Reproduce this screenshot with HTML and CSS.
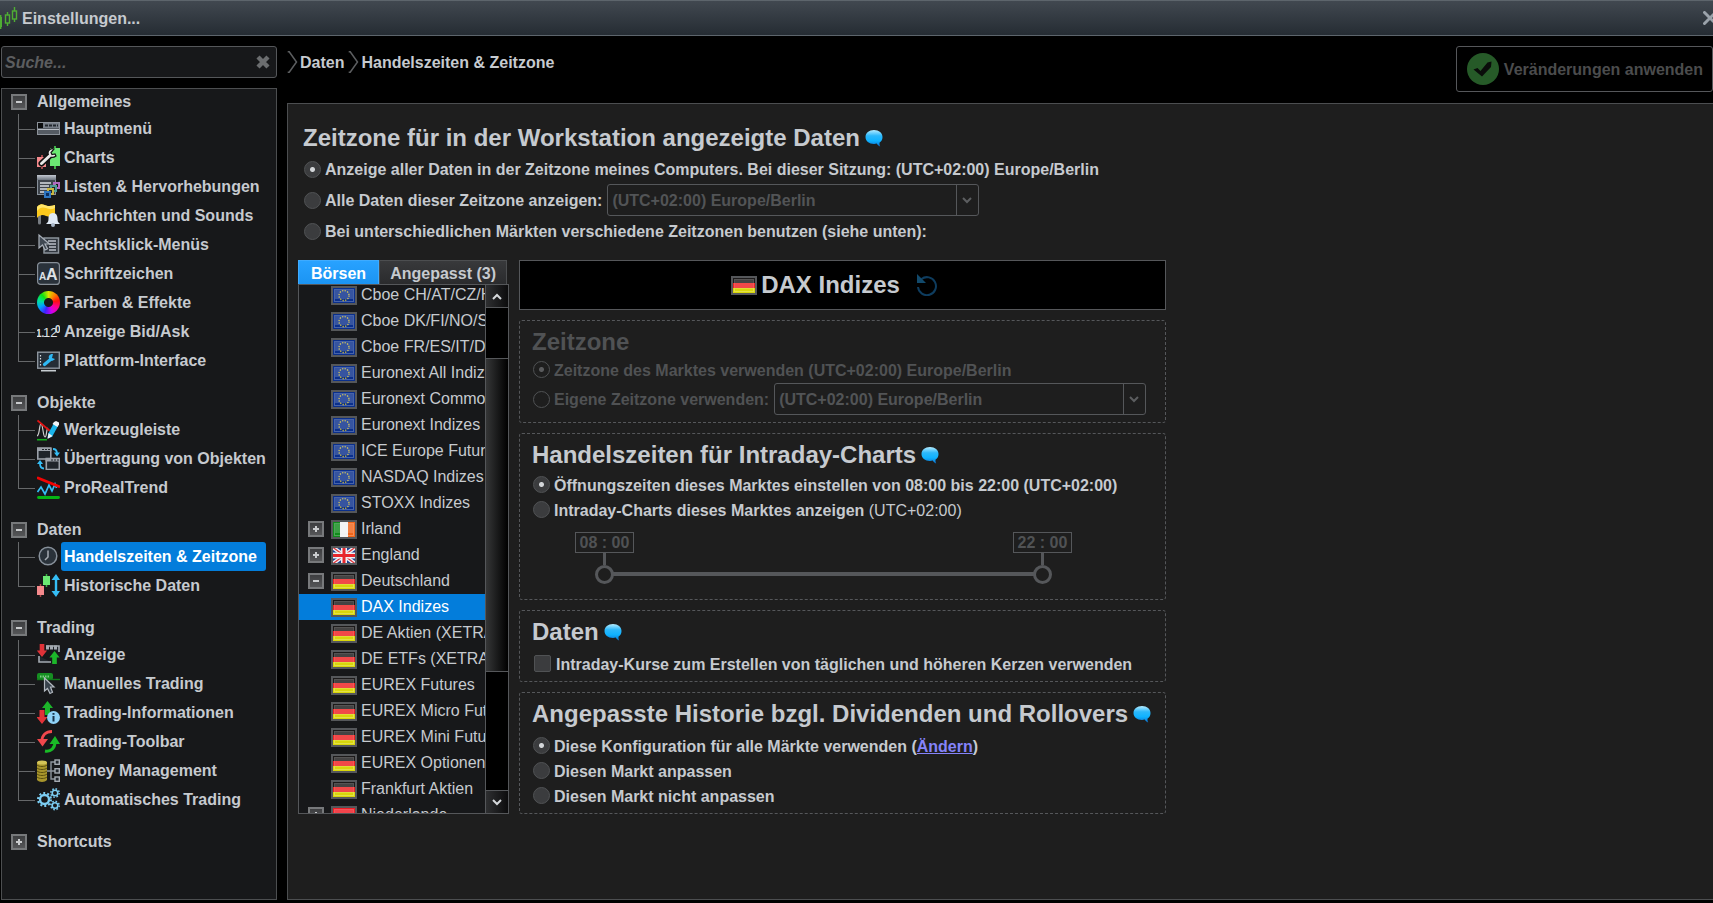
FILE: index.html
```html
<!DOCTYPE html>
<html lang="de">
<head>
  <meta charset="UTF-8" />
  <meta name="viewport" content="width=device-width, initial-scale=1" />
  <title>Einstellungen...</title>
  <link rel="stylesheet" href="styles.css">
</head>
<body>

  <!-- Shared symbols -->
  <svg class="sprite" aria-hidden="true">
    <defs>
      <linearGradient id="bubbleFill" x1="0" y1="0" x2="0" y2="1">
        <stop offset="0" stop-color="#b4ecff" />
        <stop offset="0.35" stop-color="#2cb8fb" />
        <stop offset="0.65" stop-color="#0fb2ff" />
        <stop offset="1" stop-color="#0a6fd0" />
      </linearGradient>
      <linearGradient id="steel" x1="0" y1="0" x2="0" y2="1">
        <stop offset="0" stop-color="#c3c9d2" />
        <stop offset="1" stop-color="#6d7580" />
      </linearGradient>
    </defs>
    <symbol id="bubble" viewBox="0 0 18 17">
      <path d="M9 0C4 0 .5 3 .5 7s3.500 7 8.500 7c1 0 2 0 2.800-.4.700 1.300 1.800 2.300 3.400 3-.7-1.200-.9-2.600-.6-4C16.600 11.300 17.500 9.300 17.500 7c0-4-3.500-7-8.500-7z" fill="url(#bubbleFill)" />
    </symbol>
    <symbol id="glare" viewBox="0 0 26 19">
      <path d="M4 4h18v9H4z" fill="#fff" opacity=".18" />
      <rect x="3.500" y="3.500" width="19" height="12" fill="none" stroke="#fff" stroke-opacity=".25" />
      <rect x="1" y="1" width="24" height="17" fill="none" stroke="#55575a" stroke-width="2" />
    </symbol>
    <symbol id="flag-eu" viewBox="0 0 26 19">
      <rect width="26" height="19" fill="#0a2f8c" />
      <circle cx="13" cy="9.500" r="5" fill="none" stroke="#c9b83a" stroke-width="1.300" stroke-dasharray="1.300 1.320" />
      <use href="#glare" width="26" height="19" />
    </symbol>
    <symbol id="flag-de" viewBox="0 0 26 19">
      <rect width="26" height="7" fill="#1c1a1a" />
      <rect y="7" width="26" height="5" fill="#ee2020" />
      <rect y="12" width="26" height="7" fill="#d8d60a" />
      <use href="#glare" width="26" height="19" />
    </symbol>
    <symbol id="flag-ie" viewBox="0 0 26 19">
      <rect width="9" height="19" fill="#118a1c" />
      <rect x="9" width="8" height="19" fill="#f2f2f2" />
      <rect x="17" width="9" height="19" fill="#f0651a" />
      <use href="#glare" width="26" height="19" />
    </symbol>
    <symbol id="flag-gb" viewBox="0 0 26 19">
      <rect width="26" height="19" fill="#1c3f8f" />
      <path d="M0 0l26 19M26 0L0 19" stroke="#eef0f4" stroke-width="4" />
      <path d="M0 0l26 19M26 0L0 19" stroke="#e0343a" stroke-width="1.300" />
      <path d="M13 0v19M0 9.500h26" stroke="#eef0f4" stroke-width="6" />
      <path d="M13 0v19M0 9.500h26" stroke="#e8262c" stroke-width="3" />
      <rect x="1" y="1" width="24" height="17" fill="none" stroke="#55575a" stroke-width="2" />
    </symbol>
    <symbol id="flag-nl" viewBox="0 0 26 19">
      <rect width="26" height="9" fill="#ee1c24" />
      <rect y="9" width="26" height="4" fill="#f2f2f2" />
      <rect y="13" width="26" height="6" fill="#1c3f9f" />
      <use href="#glare" width="26" height="19" />
    </symbol>
    <symbol id="arrow-up" viewBox="0 0 11 14">
      <path d="M5.500 0L11 7H8v7H3V7H0z" />
    </symbol>
    <symbol id="chevron" viewBox="0 0 11 22">
      <path d="M.7.700h1.500L9.500 11 2.200 21.300H.7" fill="none" stroke="#5c5e60" stroke-width="1.500" />
    </symbol>
  </svg>

  <!-- Title bar -->
  <header class="titlebar">
    <svg class="app-icon" width="18" height="24" viewBox="0 0 18 24" aria-hidden="true">
      <g fill="none" stroke="#4fae33" stroke-width="1.400">
        <path d="M.7 9v14M7.500 6v3M7.500 17v3M14.500 1v4M14.500 13v3" />
        <rect x="5.500" y="9" width="4" height="8" />
        <rect x="12.500" y="5" width="4" height="8" />
      </g>
      <rect y="11" width="2" height="10" fill="#4fae33" />
    </svg>
    <h1>Einstellungen...</h1>
    <button class="close" type="button" aria-label="Schließen">
      <svg width="14" height="14" viewBox="0 0 14 14"><path d="M1.500 1.500l11 11M12.500 1.500l-11 11" stroke="#9aa2aa" stroke-width="3" stroke-linecap="round" /></svg>
    </button>
  </header>

  <div class="window">

    <!-- Sidebar -->
    <aside class="sidebar">
      <form class="search" role="search">
        <input type="text" placeholder="Suche..." aria-label="Suche" />
        <button type="reset" aria-label="Suche leeren">
          <svg width="14" height="14" viewBox="0 0 14 14"><path d="M2 2l10 10M12 2L2 12" stroke="#6b6d6f" stroke-width="4.400" /></svg>
        </button>
      </form>

      <nav class="tree">
        <section>
          <h2><button class="toggle" type="button" aria-label="Zuklappen"></button>Allgemeines</h2>
          <ul>
            <li><a href="#">
              <svg viewBox="0 0 23 23"><rect x=".5" y="5.500" width="22" height="12" fill="#555b63" stroke="#8b9199" /><rect x="1" y="6" width="21" height="5" fill="#777e88" /><rect x="1" y="6" width="5" height="5" fill="#0b0c0d" /><path d="M8 8.500h13" stroke="#22272d" stroke-width="2" stroke-dasharray="3 1" /><path d="M1 12.500h21" stroke="#b9bec5" /></svg>
              <span>Hauptmenü</span></a></li>
            <li><a href="#">
              <svg viewBox="0 0 23 23"><path d="M5 9v14" stroke="#a3474a" stroke-width="2" /><rect y="11" width="9" height="10" fill="#f58a8d" /><path d="M18 0v23" stroke="#3fae45" stroke-width="2" /><rect x="13" y="2" width="10" height="18" fill="#6be873" /><path d="M4.500 17.500l8-7.500" stroke="#111" stroke-width="6" stroke-linecap="round" /><path d="M17 3c-3-1-6 1-6 4 0 4 4 6 8 3l-1-2-3 .5-1-2z" fill="#e8e8e8" stroke="#111" stroke-width="1.200" /><path d="M4.500 17.500l8-7.500" stroke="#e8e8e8" stroke-width="3" stroke-linecap="round" /></svg>
              <span>Charts</span></a></li>
            <li><a href="#">
              <svg viewBox="0 0 23 23"><rect x=".5" y=".5" width="18" height="19" fill="#3f454d" stroke="#87909a" /><rect width="19" height="5" fill="url(#steel)" /><path d="M3 8h11M3 11h9M3 14h7M3 17h5" stroke="#d8dce1" stroke-width="1.500" /><rect x="17" y="8" width="5" height="5" fill="none" stroke="#b06ac0" stroke-width="2" /><rect x="14" y="11" width="5" height="5" fill="#23262a" stroke="#4e9c95" stroke-width="2" /><rect x="11" y="14" width="5" height="5" fill="#23262a" stroke="#c8b640" stroke-width="2" /><rect x="8" y="17" width="5" height="5" fill="#0a2f60" stroke="#2f76c0" stroke-width="2" /></svg>
              <span>Listen &amp; Hervorhebungen</span></a></li>
            <li><a href="#">
              <svg viewBox="0 0 23 23"><path d="M2.500 10v9" stroke="#777c82" stroke-width="3" stroke-linecap="round" /><path d="M0 3c3-4 6-3 9-1.500 3 1 6 .5 9-.5v11c-4 1-6 1-9 0-3-1.500-6-1.500-9 2z" fill="#fbc81c" /><path d="M0 3c3-4 6-3 9-1.500 3 1 6 .5 9-.5v3c-4 2-6 1-9 0S3 3 0 7z" fill="#ffe56a" /><path d="M16 9c-3.500 0-4.500 3-4.500 5.500 0 2.500-.5 4-2.500 5.500h14c-2-1.500-2.500-3-2.500-5.500C20.500 12 19.500 9 16 9z" fill="#dfe9f5" /><circle cx="16" cy="21" r="2" fill="#a9b8c9" /></svg>
              <span>Nachrichten und Sounds</span></a></li>
            <li><a href="#">
              <svg viewBox="0 0 23 23"><rect x="7" y="5" width="14.500" height="15" fill="#30363e" stroke="#8b929b" stroke-width="1.500" /><path d="M11 8h8M12 11h7M12 14h7M12 17h7" stroke="#b9bfc7" stroke-width="1.500" /><path d="M2 2v13l3.500-3 2.500 5 2.500-1.200L8 11h4.500z" fill="#3f4852" stroke="#aab1ba" stroke-width="1.200" /></svg>
              <span>Rechtsklick-Menüs</span></a></li>
            <li><a href="#">
              <svg viewBox="0 0 23 23"><rect x=".6" y=".6" width="21.800" height="21.800" rx="3" fill="#2a323b" stroke="#868e97" stroke-width="1.200" /><text x="2" y="18" class="glyph-s">A</text><text x="9" y="18" class="glyph-l">A</text></svg>
              <span>Schriftzeichen</span></a></li>
            <li><a href="#">
              <i class="wheel"></i>
              <span>Farben &amp; Effekte</span></a></li>
            <li><a href="#">
              <svg viewBox="0 0 23 23"><text x="-1" y="17" class="glyph-s">1.</text><text x="6" y="17" class="glyph-m">12</text><text x="18" y="13" class="glyph-s">0</text></svg>
              <span>Anzeige Bid/Ask</span></a></li>
            <li><a href="#">
              <svg viewBox="0 0 23 23"><rect x=".7" y="3.200" width="21.600" height="16" fill="#252d36" stroke="#8d959e" stroke-width="1.400" /><path d="M3.500 6v11" stroke="#d5d9dd" stroke-width="1.200" stroke-dasharray="1.500 1.500" /><path d="M7.500 15.500l6-5" stroke="#2fb9f5" stroke-width="3.200" stroke-linecap="round" /><path d="M16 5c-3-.5-5 2-4 4.500 1 3 4 3 6 .5l-3-1z" fill="#2fb9f5" /><path d="M4 21.700h15" stroke="#c7ccd1" stroke-width="1.600" /></svg>
              <span>Plattform-Interface</span></a></li>
          </ul>
        </section>

        <section>
          <h2><button class="toggle" type="button" aria-label="Zuklappen"></button>Objekte</h2>
          <ul>
            <li><a href="#">
              <svg viewBox="0 0 23 23"><path d="M0 18c3-1 2-12 4-12s2 13 4 13 1-8 3-9" fill="none" stroke="#cfcfcf" stroke-width="1.200" /><path d="M.5 2.500L13 13" stroke="#e01212" stroke-width="1.700" /><path d="M0 21.700h10" stroke="#12ae1c" stroke-width="1.600" /><path d="M17 5l4 3-6 11-4.500 1 1-5z" fill="#19b4ea" /><path d="M17 4l2-1 3 1.500v2L20.500 9l-5-3z" fill="#f0f4f7" /><path d="M10.500 21l1-6 4 3z" fill="#f0f4f7" /></svg>
              <span>Werkzeugleiste</span></a></li>
            <li><a href="#">
              <svg viewBox="0 0 23 23"><rect x=".8" y="1" width="13" height="11" fill="#20252b" stroke="#9aa0a8" stroke-width="1.600" /><path d="M0 2.500h14.500" stroke="#9aa0a8" stroke-width="3" /><path d="M5 2.500h8" stroke="#20252b" stroke-dasharray="2 1" /><rect x="9.300" y="11.500" width="13" height="11" fill="#20252b" stroke="#9aa0a8" stroke-width="1.600" /><path d="M8.500 13h14.500" stroke="#9aa0a8" stroke-width="3" /><path d="M14 13h8" stroke="#20252b" stroke-dasharray="2 1" /><path d="M16 2c3 0 4 2 4 5M7 21.500c-3 0-4-2-4-5" fill="none" stroke="#35bdf5" stroke-width="1.800" /><path d="M17 5.500h6L20 9.500zM0 17h6l-3-4z" fill="#35bdf5" /></svg>
              <span>Übertragung von Objekten</span></a></li>
            <li><a href="#">
              <svg viewBox="0 0 23 23"><path d="M.5 16L4 11l4 7 4-9 3 6 3-7 1.500 4" fill="none" stroke="#35bdf5" stroke-width="1.700" /><path d="M1 2l21 8.500" stroke="#f00404" stroke-width="2.800" stroke-linecap="round" /><path d="M1.500 21.500h20" stroke="#05b414" stroke-width="2.800" stroke-linecap="round" /></svg>
              <span>ProRealTrend</span></a></li>
          </ul>
        </section>

        <section>
          <h2><button class="toggle" type="button" aria-label="Zuklappen"></button>Daten</h2>
          <ul>
            <li><a href="#" class="active" aria-current="page">
              <svg viewBox="0 0 23 23"><circle cx="11" cy="11" r="8.800" fill="#2a323a" stroke="#87909a" stroke-width="1.500" /><path d="M11 5.500V12l-3 3" fill="none" stroke="#a5abb2" stroke-width="1.500" /></svg>
              <span>Handelszeiten &amp; Zeitzone</span></a></li>
            <li><a href="#">
              <svg viewBox="0 0 23 23"><path d="M9.500 0v13" stroke="#3fae45" stroke-width="1.500" /><rect x="6" y="2" width="7" height="9" fill="#6be873" /><path d="M3.500 10v13" stroke="#a3474a" stroke-width="1.500" /><rect y="12" width="7" height="9" fill="#f58a8d" /><path d="M19 4v15" stroke="#35bdf5" stroke-width="2.400" /><path d="M14.500 6L19 0l4 6zM14.500 17l4.500 6 4-6z" fill="#35bdf5" /></svg>
              <span>Historische Daten</span></a></li>
          </ul>
        </section>

        <section>
          <h2><button class="toggle" type="button" aria-label="Zuklappen"></button>Trading</h2>
          <ul>
            <li><a href="#">
              <svg viewBox="0 0 23 23"><path d="M9 3h13v6M2 13v6h12" fill="#22272d" stroke="#a4aab1" stroke-width="1.600" /><path d="M9 4.500h12" stroke="#a4aab1" stroke-width="4" stroke-dasharray="3 1" /><use href="#arrow-up" x="12" y="8" width="11" height="13" fill="#1cb62a" /><use href="#arrow-up" x="-10.500" y="-14" width="11" height="13" fill="#e03238" transform="rotate(180)" /></svg>
              <span>Anzeige</span></a></li>
            <li><a href="#">
              <svg viewBox="0 0 23 23"><rect y="1" width="16" height="7" rx="2" fill="#168f22" /><path d="M3 4.500h10" stroke="#7ccc82" stroke-width="2" stroke-dasharray="1.500 1" /><path d="M0 7.500h23" stroke="#117a1b" stroke-width="1.400" /><path d="M7.500 6v13l3-2.500 2.500 5 2.500-1.200L13.500 15h3.500z" fill="#39434d" stroke="#b3b9c0" stroke-width="1.200" /></svg>
              <span>Manuelles Trading</span></a></li>
            <li><a href="#">
              <svg viewBox="0 0 23 23"><use href="#arrow-up" x="5" y="0" width="11" height="14" fill="#1cb62a" /><use href="#arrow-up" x="-10.500" y="-23" width="11" height="14" fill="#e03238" transform="rotate(180)" /><circle cx="16.500" cy="16.500" r="6.500" fill="#8fd2f7" /><path d="M16.500 12v1.800M16.500 15v5.500" stroke="#16324a" stroke-width="2" /></svg>
              <span>Trading-Informationen</span></a></li>
            <li><a href="#">
              <svg viewBox="0 0 23 23"><path d="M5 11C5 5 9 1.500 15 1.500" fill="none" stroke="#f2474c" stroke-width="3" /><path d="M0 9h11l-5.500 7.500z" fill="#f2474c" /><path d="M8 21c6 1 10-3 10-9" fill="none" stroke="#19bb26" stroke-width="3" /><path d="M12.500 14H23l-5-8z" fill="#19bb26" /></svg>
              <span>Trading-Toolbar</span></a></li>
            <li><a href="#">
              <svg viewBox="0 0 23 23"><path d="M0 3v18c2 2.500 8 2.500 10 0V3z" fill="#a8952c" /><path d="M0 6c2 2 8 2 10 0M0 9c2 2 8 2 10 0M0 12c2 2 8 2 10 0M0 15c2 2 8 2 10 0M0 18c2 2 8 2 10 0" fill="none" stroke="#5c500f" /><ellipse cx="5" cy="3.500" rx="5" ry="2" fill="#d4c458" /><path d="M10 12h8M18 3h-4v17h4" fill="none" stroke="#8e959d" stroke-width="1.400" /><g fill="#22272d" stroke="#a4aab1" stroke-width="1.400"><rect x="18" y="1" width="4.300" height="4.300" /><rect x="18" y="9.700" width="4.300" height="4.300" /><rect x="18" y="18" width="4.300" height="4.300" /></g></svg>
              <span>Money Management</span></a></li>
            <li><a href="#">
              <svg viewBox="0 0 23 23" fill="none" stroke="#7ccdf2"><circle cx="7.500" cy="11.500" r="4.500" stroke-width="2.400" /><circle cx="7.500" cy="11.500" r="6.500" stroke-width="2" stroke-dasharray="2 2.080" /><circle cx="18" cy="5" r="2.800" stroke-width="1.600" /><circle cx="18" cy="5" r="4.200" stroke-width="1.500" stroke-dasharray="1.600 1.700" /><circle cx="18" cy="17.500" r="2.800" stroke-width="1.600" /><circle cx="18" cy="17.500" r="4.200" stroke-width="1.500" stroke-dasharray="1.600 1.700" /></svg>
              <span>Automatisches Trading</span></a></li>
          </ul>
        </section>

        <section>
          <h2><button class="toggle plus" type="button" aria-label="Aufklappen"></button>Shortcuts</h2>
        </section>
      </nav>
    </aside>

    <!-- Content -->
    <main class="content">
      <div class="topline">
        <nav class="breadcrumb" aria-label="Pfad">
          <svg width="11" height="22"><use href="#chevron" /></svg><span>Daten</span>
          <svg width="11" height="22"><use href="#chevron" /></svg><span>Handelszeiten &amp; Zeitzone</span>
        </nav>
        <button class="apply" type="button" disabled>
          <svg width="32" height="32" viewBox="0 0 32 32"><circle cx="16" cy="16" r="16" fill="#265a28" /><path d="M6.500 16.500l4-1.500 3 3 7-8.500 4-1-.5 5.500L15 23.500z" fill="#0a0c0a" /></svg>
          <span>Veränderungen anwenden</span>
        </button>
      </div>

      <div class="panel">
        <div class="global">
          <h2 class="title">Zeitzone für in der Workstation angezeigte Daten <svg width="18" height="17"><use href="#bubble" /></svg></h2>
          <div class="option tall">
            <input type="radio" name="display" id="tz-computer" checked />
            <label for="tz-computer">Anzeige aller Daten in der Zeitzone meines Computers. Bei dieser Sitzung: (UTC+02:00) Europe/Berlin</label>
          </div>
          <div class="option">
            <input type="radio" name="display" id="tz-all" />
            <label for="tz-all">Alle Daten dieser Zeitzone anzeigen:</label>
            <span class="dropdown">
              <select aria-label="Zeitzone für alle Daten" disabled><option>(UTC+02:00) Europe/Berlin</option></select>
              <svg width="10" height="7" viewBox="0 0 10 7"><path d="M1 1l4 4 4-4" /></svg>
            </span>
          </div>
          <div class="option tall">
            <input type="radio" name="display" id="tz-mixed" />
            <label for="tz-mixed">Bei unterschiedlichen Märkten verschiedene Zeitzonen benutzen (siehe unten):</label>
          </div>
        </div>

        <div class="columns">
          <div class="markets">
            <div class="tabs" role="tablist">
              <button type="button" role="tab" class="selected" aria-selected="true">Börsen</button>
              <button type="button" role="tab" aria-selected="false">Angepasst (3)</button>
            </div>
            <div class="listbox">
              <ul>
                <li><a href="#"><svg><use href="#flag-eu" /></svg>Cboe CH/AT/CZ/HU</a></li>
                <li><a href="#"><svg><use href="#flag-eu" /></svg>Cboe DK/FI/NO/SE</a></li>
                <li><a href="#"><svg><use href="#flag-eu" /></svg>Cboe FR/ES/IT/DE</a></li>
                <li><a href="#"><svg><use href="#flag-eu" /></svg>Euronext All Indizes</a></li>
                <li><a href="#"><svg><use href="#flag-eu" /></svg>Euronext Commodities</a></li>
                <li><a href="#"><svg><use href="#flag-eu" /></svg>Euronext Indizes</a></li>
                <li><a href="#"><svg><use href="#flag-eu" /></svg>ICE Europe Futures</a></li>
                <li><a href="#"><svg><use href="#flag-eu" /></svg>NASDAQ Indizes</a></li>
                <li><a href="#"><svg><use href="#flag-eu" /></svg>STOXX Indizes</a></li>
                <li><button class="toggle plus" type="button" aria-label="Aufklappen"></button><a href="#"><svg><use href="#flag-ie" /></svg>Irland</a></li>
                <li><button class="toggle plus" type="button" aria-label="Aufklappen"></button><a href="#"><svg><use href="#flag-gb" /></svg>England</a></li>
                <li><button class="toggle" type="button" aria-label="Zuklappen"></button><a href="#"><svg><use href="#flag-de" /></svg>Deutschland</a></li>
                <li class="active"><a href="#"><svg><use href="#flag-de" /></svg>DAX Indizes</a></li>
                <li><a href="#"><svg><use href="#flag-de" /></svg>DE Aktien (XETRA)</a></li>
                <li><a href="#"><svg><use href="#flag-de" /></svg>DE ETFs (XETRA)</a></li>
                <li><a href="#"><svg><use href="#flag-de" /></svg>EUREX Futures</a></li>
                <li><a href="#"><svg><use href="#flag-de" /></svg>EUREX Micro Futures</a></li>
                <li><a href="#"><svg><use href="#flag-de" /></svg>EUREX Mini Futures</a></li>
                <li><a href="#"><svg><use href="#flag-de" /></svg>EUREX Optionen</a></li>
                <li><a href="#"><svg><use href="#flag-de" /></svg>Frankfurt Aktien</a></li>
                <li><button class="toggle plus" type="button" aria-label="Aufklappen"></button><a href="#"><svg><use href="#flag-nl" /></svg>Niederlande</a></li>
              </ul>
              <div class="scrollbar">
                <button type="button" aria-label="Nach oben"><svg width="10" height="7" viewBox="0 0 10 7"><path d="M1 6l4-4 4 4" /></svg></button>
                <div class="track"><div class="thumb"></div></div>
                <button type="button" aria-label="Nach unten"><svg width="10" height="7" viewBox="0 0 10 7"><path d="M1 1l4 4 4-4" /></svg></button>
              </div>
            </div>
          </div>

          <div class="details">
            <div class="market-title">
              <svg width="26" height="19"><use href="#flag-de" /></svg>
              <h2 class="title">DAX Indizes</h2>
              <button type="button" aria-label="Zurücksetzen" disabled>
                <svg width="22" height="22" viewBox="0 0 22 22"><path d="M5.500 5A9 9 0 1 1 2 13" fill="none" stroke="#0e3c5e" stroke-width="2" /><path d="M1 0v9h9z" fill="#124a6c" /></svg>
              </button>
            </div>

            <section class="box zone">
              <h2 class="title">Zeitzone</h2>
              <div class="option">
                <input type="radio" name="zone" id="zone-market" checked disabled />
                <label for="zone-market">Zeitzone des Marktes verwenden (UTC+02:00) Europe/Berlin</label>
              </div>
              <div class="option">
                <input type="radio" name="zone" id="zone-own" disabled />
                <label for="zone-own">Eigene Zeitzone verwenden:</label>
                <span class="dropdown">
                  <select aria-label="Eigene Zeitzone" disabled><option>(UTC+02:00) Europe/Berlin</option></select>
                  <svg width="10" height="7" viewBox="0 0 10 7"><path d="M1 1l4 4 4-4" /></svg>
                </span>
              </div>
            </section>

            <section class="box hours">
              <h2 class="title">Handelszeiten für Intraday-Charts <svg width="18" height="17"><use href="#bubble" /></svg></h2>
              <div class="option">
                <input type="radio" name="hours" id="hours-market" checked />
                <label for="hours-market">Öffnungszeiten dieses Marktes einstellen von 08:00 bis 22:00 (UTC+02:00)</label>
              </div>
              <div class="option">
                <input type="radio" name="hours" id="hours-custom" />
                <label for="hours-custom">Intraday-Charts dieses Marktes anzeigen <span class="light">(UTC+02:00)</span></label>
              </div>
              <div class="slider">
                <div class="times">
                  <input type="text" value="08 : 00" aria-label="Beginn" disabled />
                  <input type="text" value="22 : 00" aria-label="Ende" disabled />
                </div>
                <div class="range">
                  <input type="range" min="8" max="22" value="8" aria-label="Beginn" disabled />
                  <input type="range" min="8" max="22" value="22" aria-label="Ende" disabled />
                </div>
              </div>
            </section>

            <section class="box data">
              <h2 class="title">Daten <svg width="18" height="17"><use href="#bubble" /></svg></h2>
              <div class="option">
                <input type="checkbox" id="use-intraday" />
                <label for="use-intraday">Intraday-Kurse zum Erstellen von täglichen und höheren Kerzen verwenden</label>
              </div>
            </section>

            <section class="box history">
              <h2 class="title">Angepasste Historie bzgl. Dividenden und Rollovers <svg width="18" height="17"><use href="#bubble" /></svg></h2>
              <div class="option">
                <input type="radio" name="history" id="history-all" checked />
                <label for="history-all">Diese Konfiguration für alle Märkte verwenden (<a href="#">Ändern</a>)</label>
              </div>
              <div class="option">
                <input type="radio" name="history" id="history-adjust" />
                <label for="history-adjust">Diesen Markt anpassen</label>
              </div>
              <div class="option">
                <input type="radio" name="history" id="history-none" />
                <label for="history-none">Diesen Markt nicht anpassen</label>
              </div>
            </section>
          </div>
        </div>
      </div>
    </main>
  </div>

</body>
</html>
```

FILE: styles.css
```css
* {
  box-sizing: border-box;
}
body {
  margin: 0;
  height: 100vh;
  display: flex;
  flex-direction: column;
  overflow: hidden;
  background: #000;
  color: #c6cacf;
  font: bold 16px/20px 'Liberation Sans', Arial, sans-serif;
}
h1,
h2,
ul {
  margin: 0;
  padding: 0;
  list-style: none;
  font-size: 16px;
}
a {
  color: inherit;
  text-decoration: none;
}
button,
input,
select {
  margin: 0;
  padding: 0;
  border: none;
  background: none;
  color: inherit;
  font: inherit;
}
svg {
  display: block;
  flex: none;
}
.sprite {
  position: absolute;
  width: 0;
  height: 0;
}

/* Title bar */
.titlebar {
  display: flex;
  align-items: center;
  flex: none;
  height: 36px;
  border-top: 1px solid #5d656c;
  border-bottom: 1px solid #5d656c;
  background: linear-gradient(#414850, #252c33);
}
.titlebar h1 {
  flex: 1;
  margin-left: 4px;
  padding-top: 2px;
}
.close {
  margin-right: -4px;
}

/* Window layout */
.window {
  flex: 1;
  min-height: 0;
  display: grid;
  grid-template-columns: 276px 1fr;
  gap: 10px;
  padding: 10px 0 3px 1px;
}
.sidebar {
  display: flex;
  flex-direction: column;
  gap: 10px;
  min-height: 0;
}
.search {
  display: flex;
  align-items: center;
  height: 32px;
  padding: 0 6px 0 3px;
  border: 1px solid #55575a;
  border-radius: 3px;
  background: #17181a;
}
.search input {
  flex: 1;
  min-width: 0;
  padding-top: 2px;
  outline: none;
}
.search input::placeholder {
  color: #5c5d5f;
  font-style: italic;
}

/* Tree */
.tree {
  flex: 1;
  min-height: 0;
  border: 1px solid #4c4e50;
  background: #17181a;
}
.tree section {
  margin-bottom: 15px;
}
.tree h2 {
  display: flex;
  align-items: center;
  gap: 10px;
  height: 25px;
  padding-left: 9px;
}
.tree li {
  position: relative;
  height: 29px;
  padding-left: 35px;
}
.tree li::before {
  content: '';
  position: absolute;
  left: 16px;
  top: 0;
  width: 16px;
  height: 15px;
  border-left: 1px solid #66686a;
  border-bottom: 1px solid #66686a;
}
.tree li:not(:last-child)::after {
  content: '';
  position: absolute;
  left: 16px;
  top: 15px;
  height: 14px;
  border-left: 1px solid #66686a;
}
.tree a {
  display: flex;
  align-items: center;
  height: 29px;
}
.tree a svg,
.wheel {
  flex: none;
  width: 23px;
  height: 23px;
}
.tree a span {
  margin-left: 1px;
  padding: 0 9px 0 3px;
  border-radius: 3px;
  line-height: 29px;
  white-space: nowrap;
}
.tree a.active span {
  background: #037ddb;
  color: #fff;
}
.wheel {
  border-radius: 50%;
  background:
    radial-gradient(circle, #17181a 0 4px, transparent 5px),
    conic-gradient(#d8e000, #ff8000, #ff1010, #ff0090, #d000f0, #4020ff, #00a0ff, #00e0a0, #10e010, #d8e000);
}
.glyph-s,
.glyph-m,
.glyph-l {
  fill: #dfe2e6;
  font-size: 10px;
}
.glyph-m {
  font-size: 13px;
  font-weight: normal;
}
.glyph-l {
  font-size: 16px;
}
.toggle {
  position: relative;
  flex: none;
  width: 16px;
  height: 16px;
  border: 2px solid #77797b;
  background: linear-gradient(#3d3e40, #555658);
}
.toggle::before,
.toggle.plus::after {
  content: '';
  position: absolute;
  left: 3px;
  top: 5px;
  width: 6px;
  height: 2px;
  background: #c9cbcd;
}
.toggle.plus::after {
  left: 5px;
  top: 3px;
  width: 2px;
  height: 6px;
}

/* Breadcrumb and apply button */
.content {
  display: flex;
  flex-direction: column;
  min-width: 0;
  min-height: 0;
}
.topline {
  display: flex;
  justify-content: space-between;
  align-items: flex-start;
  margin-bottom: 11px;
}
.breadcrumb {
  display: flex;
  align-items: center;
  height: 32px;
}
.breadcrumb span {
  margin: 0 4px 0 2px;
  padding-top: 2px;
}
.apply {
  display: flex;
  align-items: center;
  gap: 5px;
  height: 46px;
  padding: 0 9px 0 10px;
  border: 1px solid #55575a;
  border-radius: 3px;
  color: #4b4c4d;
}
.apply span {
  padding-top: 2px;
}

.panel {
  flex: 1;
  min-height: 0;
  padding: 18px 10px 0;
  border: 1px solid #4c4e50;
  border-right: none;
  background: #1e1e1e;
}
.title {
  display: flex;
  align-items: center;
  gap: 5px;
  font-size: 24px;
  line-height: 28px;
  white-space: nowrap;
}

/* Options */
.option {
  display: flex;
  align-items: center;
  min-height: 25px;
  white-space: nowrap;
}
.option label {
  margin-left: 4px;
  padding-top: 2px;
}
.option .light {
  font-weight: normal;
}
.option label a {
  color: #8583fa;
  text-decoration: underline;
}
input[type="radio"],
input[type="checkbox"] {
  appearance: none;
  flex: none;
  width: 17px;
  height: 17px;
  margin-left: 1px;
  border: 1px solid #505254;
  border-radius: 50%;
  background: #3b3c3e;
}
input[type="radio"]:checked {
  background: radial-gradient(circle, #d3d6d9 0 2px, #3b3c3e 3px);
}
input[type="radio"]:disabled {
  background: none;
}
input[type="radio"]:checked:disabled {
  background: radial-gradient(circle, #5a5b5d 0 2px, transparent 3px);
}
input[type="checkbox"] {
  margin-left: 2px;
  border-radius: 2px;
}
input[type="checkbox"] + label {
  margin-left: 5px;
}
.dropdown {
  position: relative;
  margin-left: 5px;
}
.dropdown select {
  display: block;
  appearance: none;
  width: 372px;
  height: 32px;
  padding: 2px 0 0 4px;
  border: 1px solid #55575a;
  border-radius: 3px;
  background: linear-gradient(#55575a, #55575a) right 21px top / 1px 100% no-repeat;
  color: #525456;
  opacity: 1;
}
.dropdown svg {
  position: absolute;
  right: 7px;
  top: 13px;
  fill: none;
  stroke: #5c5e60;
  stroke-width: 2;
}
.global {
  padding-left: 5px;
}
.global .title {
  line-height: 32px;
}
.global .option.tall {
  height: 30px;
}

/* Columns */
.columns {
  display: grid;
  grid-template-columns: 211px 1fr;
  gap: 10px;
  max-width: 868px;
  margin-top: 14px;
}
.markets {
  display: flex;
  flex-direction: column;
}
.tabs {
  display: flex;
  height: 24px;
  padding-right: 2px;
}
.tabs button {
  flex: 1 0 auto;
  padding: 0 10px;
  border: 1px solid #4c4e50;
  border-bottom: none;
  background: linear-gradient(#38393b, #2a2b2d);
  line-height: 25px;
}
.tabs .selected {
  flex: none;
  padding: 0 12px;
  border-color: #3eabff;
  background: linear-gradient(#28a2ff, #1b94f3);
  color: #fff;
}
.listbox {
  flex: 1 1 0;
  min-height: 0;
  display: flex;
  overflow: hidden;
  border: 1px solid #55575a;
  background: #17181a;
}
.listbox ul {
  flex: 1;
  min-width: 0;
  margin-top: -3px;
  overflow: hidden;
  font-size: 16px;
  font-weight: normal;
}
.listbox li {
  display: flex;
  align-items: center;
  justify-content: flex-end;
  gap: 7px;
  height: 26px;
  padding-left: 9px;
}
.listbox li a {
  flex: none;
  display: flex;
  align-items: center;
  gap: 4px;
  width: 154px;
  white-space: nowrap;
}
.listbox li svg {
  width: 26px;
  height: 19px;
}
.listbox li.active {
  background: #037ddb;
  color: #fff;
}
.scrollbar {
  display: flex;
  flex-direction: column;
  width: 23px;
  border-left: 1px solid #55575a;
  background: #000;
}
.scrollbar button {
  display: flex;
  align-items: center;
  justify-content: center;
  height: 22px;
  background: linear-gradient(90deg, #2e2f31, #0c0c0d);
}
.scrollbar svg {
  fill: none;
  stroke: #d5d8db;
  stroke-width: 2;
}
.track {
  flex: 1;
  display: grid;
  grid-template-rows: 50fr 314fr 118fr;
  border-top: 1px solid #55575a;
  border-bottom: 1px solid #55575a;
}
.thumb {
  grid-row: 2;
  border-top: 1px solid #55575a;
  border-bottom: 1px solid #55575a;
  background: linear-gradient(90deg, #353637, #000);
}

/* Market details */
.details {
  display: flex;
  flex-direction: column;
  gap: 10px;
  min-width: 0;
}
.market-title {
  display: flex;
  align-items: center;
  justify-content: center;
  gap: 4px;
  height: 50px;
  padding-right: 16px;
  border: 1px solid #55575a;
  background: #000;
}
.market-title button {
  margin-left: 12px;
}
.box {
  padding: 7px 12px 5px;
  border: 1px dashed #55575a;
  border-radius: 3px;
}
.box .title {
  margin-bottom: 5px;
}
.zone {
  padding-bottom: 7px;
  color: #505254;
}
.zone .title {
  margin-bottom: 0;
}
.zone .option {
  min-height: 27px;
}
.hours .title {
  margin-bottom: 3px;
}

/* Time range */
.slider {
  width: 497px;
  margin: 10px 0 10px 43px;
}
.times {
  display: flex;
  justify-content: space-between;
}
.times input {
  width: 59px;
  height: 21px;
  border: 1px solid #55575a;
  color: #505254;
  text-align: center;
}
.range {
  position: relative;
  height: 31px;
  margin: 0 20px;
  background:
    linear-gradient(#55575a, #55575a) left 8px top / 3px 12px no-repeat,
    linear-gradient(#55575a, #55575a) right 8px top / 3px 12px no-repeat;
}
.range::before {
  content: '';
  position: absolute;
  left: 18px;
  right: 18px;
  top: 19px;
  height: 4px;
  background: #55575a;
}
.range input {
  appearance: none;
  position: absolute;
  left: 0;
  top: 11px;
  width: 100%;
  height: 20px;
}
.range input::-webkit-slider-thumb {
  appearance: none;
  width: 19px;
  height: 19px;
  border: 3px solid #55575a;
  border-radius: 50%;
  background: #1e1e1e;
}
```
